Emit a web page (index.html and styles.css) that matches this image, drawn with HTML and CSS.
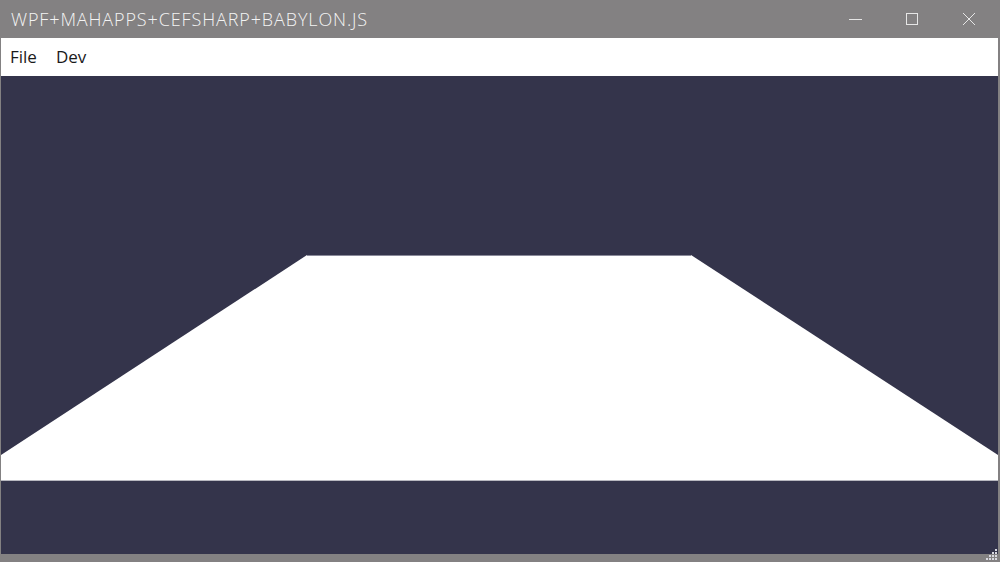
FILE: index.html
```html
<!DOCTYPE html>
<html>
<head>
<meta charset="utf-8">
<link rel="stylesheet" href="styles.css">
</head>
<body>
<div class="window">
  <div class="titlebar">
    <div class="title">WPF+MAHAPPS+CEFSHARP+BABYLON.JS</div>
    <div class="controls">
      <div class="btn">
        <svg width="14" height="14" viewBox="0 0 14 14"><path d="M1 7.5H14" stroke="#e6e6e6" stroke-width="1"/></svg>
      </div>
      <div class="btn">
        <svg width="14" height="14" viewBox="0 0 14 14"><rect x="1.5" y="1.5" width="11" height="11" fill="none" stroke="#e6e6e6" stroke-width="1"/></svg>
      </div>
      <div class="btn">
        <svg width="14" height="14" viewBox="0 0 14 14"><path d="M1 1L13 13M13 1L1 13" stroke="#e6e6e6" stroke-width="1"/></svg>
      </div>
    </div>
  </div>
  <div class="menubar">
    <span class="menu-item">File</span>
    <span class="menu-item">Dev</span>
  </div>
  <div class="canvas">
    <svg class="scene" width="997" height="478" viewBox="0 0 997 478">
      <polygon points="0,379 306,179 690,179 997,379 997,404 0,404" fill="#ffffff"/>
      <line x1="0" y1="404.5" x2="997" y2="404.5" stroke="#b8b8c0" stroke-width="1"/>
      <line x1="306" y1="179.5" x2="690" y2="179.5" stroke="#8a8a9a" stroke-width="1"/>
    </svg>
  </div>
  <div class="statusbar">
    <svg class="grip" width="12" height="12" viewBox="0 0 12 12">
      <rect x="9" y="0" width="2" height="2" fill="#d8d8e0"/>
      <rect x="6" y="3" width="2" height="2" fill="#d8d8e0"/>
      <rect x="9" y="3" width="2" height="2" fill="#d8d8e0"/>
      <rect x="3" y="6" width="2" height="2" fill="#d8d8e0"/>
      <rect x="6" y="6" width="2" height="2" fill="#d8d8e0"/>
      <rect x="9" y="6" width="2" height="2" fill="#d8d8e0"/>
      <rect x="0" y="9" width="2" height="2" fill="#d8d8e0"/>
      <rect x="3" y="9" width="2" height="2" fill="#d8d8e0"/>
      <rect x="6" y="9" width="2" height="2" fill="#d8d8e0"/>
      <rect x="9" y="9" width="2" height="2" fill="#d8d8e0"/>
    </svg>
  </div>
</div>
</body>
</html>
```
FILE: styles.css
```css
html, body {
  margin: 0;
  padding: 0;
  width: 1000px;
  height: 562px;
  overflow: hidden;
  background: #838182;
}
.window {
  position: relative;
  width: 1000px;
  height: 562px;
  display: flex;
  flex-direction: column;
  font-family: "Open Sans", "Noto Sans", sans-serif;
}
.titlebar {
  height: 38px;
  background: #838182;
  display: flex;
  align-items: center;
  justify-content: space-between;
}
.title {
  color: #f4f4f4;
  font-size: 18px;
  font-weight: 300;
  padding-left: 11px;
  letter-spacing: 0.88px;
  padding-bottom: 1px;
}
.controls {
  display: flex;
  height: 38px;
  margin-right: 3px;
}
.btn {
  width: 57px;
  height: 38px;
  display: flex;
  align-items: center;
  justify-content: center;
  padding-bottom: 1px;
  box-sizing: border-box;
}
.menubar {
  height: 38px;
  margin: 0 2px 0 1px;
  background: #ffffff;
  display: flex;
  align-items: center;
  gap: 19px;
  padding-left: 9px;
  padding-bottom: 1px;
  box-sizing: border-box;
}
.menu-item {
  font-size: 17px;
  color: #1a1a1a;
}
.canvas {
  height: 478px;
  margin: 0 2px 0 1px;
  background: #34344b;
  overflow: hidden;
}
.scene {
  display: block;
}
.statusbar {
  flex: 1;
  background: #838182;
}
.grip {
  position: absolute;
  right: 2px;
  bottom: 1px;
}
```
